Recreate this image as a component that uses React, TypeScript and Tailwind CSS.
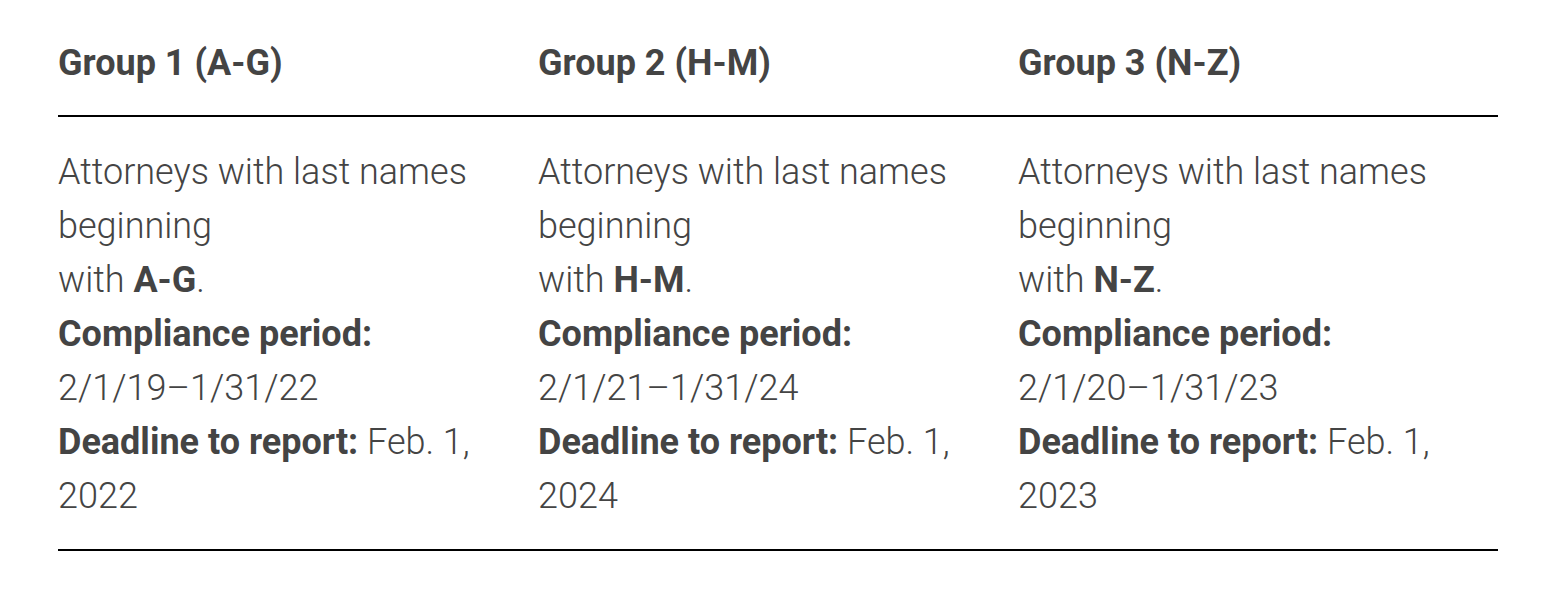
const groups = [
  { title: 'Group 1 (A-G)', letters: 'A-G', period: '2/1/19–1/31/22', deadline: 'Feb. 1, 2022' },
  { title: 'Group 2 (H-M)', letters: 'H-M', period: '2/1/21–1/31/24', deadline: 'Feb. 1, 2024' },
  { title: 'Group 3 (N-Z)', letters: 'N-Z', period: '2/1/20–1/31/23', deadline: 'Feb. 1, 2023' },
];

export default function App() {
  return (
    <div className="min-h-screen bg-white font-['Roboto',sans-serif] text-[#444444]">
      <div className="ml-[58px] w-[1440px]">
        <div className="grid grid-cols-3 border-b-[2px] border-black pt-[36px] pb-[25px]">
          {groups.map(g => (
            <div key={g.title} className="text-[36px] leading-[54px] font-bold">
              {g.title}
            </div>
          ))}
        </div>
        <div className="grid grid-cols-3 border-b-[2px] border-black pt-[28px] pb-[26px]">
          {groups.map(g => (
            <div key={g.title} className="pr-2 text-[36px] leading-[54px] font-light">
              Attorneys with last names beginning
              <br />
              with <b className="font-bold">{g.letters}</b>.
              <br />
              <b className="font-bold">Compliance period:</b>
              <br />
              {g.period}
              <br />
              <b className="font-bold">Deadline to report:</b> {g.deadline}
            </div>
          ))}
        </div>
      </div>
    </div>
  );
}
